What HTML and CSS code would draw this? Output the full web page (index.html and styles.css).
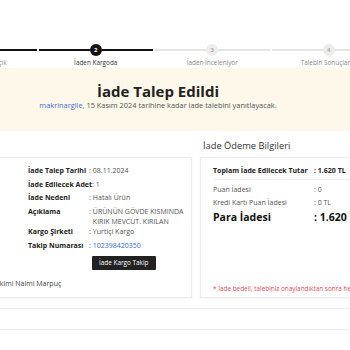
FILE: index.html
```html
<!DOCTYPE html>
<html lang="tr">

<head>
    <meta charset="UTF-8">
    <meta name="viewport" content="width=device-width, initial-scale=1.0">
    <title>İade Talebi</title>
    <link rel="stylesheet" href="styles.css">
</head>

<body>
    <div class="page">
        <!-- Steps -->
        <div class="steps">
            <div class="step done">
                <div class="step-bar"><span class="line"></span><span class="dot">1</span><span class="line"></span></div>
                <div class="step-label">İade Talebiniz Açık</div>
            </div>
            <div class="step done current">
                <div class="step-bar"><span class="line"></span><span class="dot">2</span><span class="line"></span></div>
                <div class="step-label">İaden Kargoda</div>
            </div>
            <div class="step">
                <div class="step-bar"><span class="line"></span><span class="dot">3</span><span class="line"></span></div>
                <div class="step-label">İaden İnceleniyor</div>
            </div>
            <div class="step">
                <div class="step-bar"><span class="line"></span><span class="dot">4</span><span class="line"></span></div>
                <div class="step-label">Talebin Sonuçlandı</div>
            </div>
        </div>

        <!-- Banner -->
        <div class="banner">
            <h1>İade Talep Edildi</h1>
            <p><a href="#">makrinargile</a>, 15 Kasım 2024 tarihine kadar iade talebini yanıtlayacak.</p>
        </div>

        <div class="columns">
            <div class="col">
                <h2 class="col-title">Ürün Bilgileri</h2>
                <div class="card product-card">
                    <div class="product">
                        <div class="thumb"></div>
                        <div class="details">
                            <div class="row"><span class="label">İade Talep Tarihi</span><span class="colon">:</span><span class="value">08.11.2024</span></div>
                            <div class="row"><span class="label">İade Edilecek Adet</span><span class="colon">:</span><span class="value">1</span></div>
                            <div class="row"><span class="label">İade Nedeni</span><span class="colon">:</span><span class="value">Hatalı Ürün</span></div>
                            <div class="row"><span class="label">Açıklama</span><span class="colon">:</span><span class="value desc">ÜRÜNÜN GÖVDE KISMINDA KIRIK MEVCUT. KIRILAN PARÇA</span></div>
                            <div class="row"><span class="label">Kargo Şirketi</span><span class="colon">:</span><span class="value">Yurtiçi Kargo</span></div>
                            <div class="row"><span class="label">Takip Numarası</span><span class="colon">:</span><span class="value"><a href="#">102398420350</a></span></div>
                            <button class="track-btn">İade Kargo Takip</button>
                        </div>
                    </div>
                    <div class="seller">Satıcı: Hakimi Naimi Marpuç</div>
                </div>
            </div>

            <div class="col">
                <h2 class="col-title">İade Ödeme Bilgileri</h2>
                <div class="card pay-card">
                    <div class="pay-row total"><span class="pay-label">Toplam İade Edilecek Tutar</span><span>: 1.620 TL</span></div>
                    <div class="pay-row"><span class="pay-label">Puan İadesi</span><span>: 0</span></div>
                    <div class="pay-row"><span class="pay-label">Kredi Kartı Puan İadesi</span><span>: 0 TL</span></div>
                    <div class="pay-row big"><span class="pay-label">Para İadesi</span><span>: 1.620 TL</span></div>
                    <p class="note">* İade bedeli, talebiniz onaylandıktan sonra hesabınıza aktarılacaktır.</p>
                </div>
            </div>
        </div>

        <div class="more"></div>
    </div>
</body>

</html>
```

FILE: styles.css
```css
* {
    margin: 0;
    padding: 0;
    box-sizing: border-box;
}

body {
    font-family: 'Open Sans', 'Liberation Sans', sans-serif;
    background-color: #fff;
    color: #333;
    overflow: hidden;
}

.page {
    width: 474px;
    margin-left: -79px;
    padding-top: 44px;
}

/* Steps */
.steps {
    display: grid;
    grid-template-columns: repeat(4, 116.5px);
}

.step {
    display: flex;
    flex-direction: column;
    align-items: center;
}

.step-bar {
    display: flex;
    align-items: center;
    width: 100%;
    padding: 0 1px;
}

.step-bar .line {
    flex: 1;
    height: 2px;
    background-color: #e4e4e4;
}

.step.done .line {
    background-color: #111;
}

.dot {
    width: 12px;
    height: 12px;
    border-radius: 50%;
    background-color: #ececec;
    color: #aaa;
    font-size: 6px;
    font-weight: 700;
    line-height: 12px;
    text-align: center;
}

.step.done .dot {
    background-color: #111;
    color: #fff;
}

.step-label {
    margin-top: 2px;
    font-size: 6.4px;
    line-height: 9px;
    color: #888;
    white-space: nowrap;
}

.step.current .step-label {
    color: #333;
}

/* Banner */
.banner {
    margin-top: 1px;
    background-color: #fdf8e9;
    padding: 15px 0 21px;
    text-align: center;
}

.banner h1 {
    font-size: 15px;
    line-height: 17px;
    font-weight: 700;
    color: #222;
}

.banner p {
    font-size: 7.4px;
    line-height: 10px;
    color: #555;
}

.banner a {
    color: #3f6fd6;
    text-decoration: none;
}

/* Columns */
.columns {
    display: grid;
    grid-template-columns: 271px 195px;
    gap: 8px;
    margin-top: 8px;
}

.col {
    display: flex;
    flex-direction: column;
}

.col-title {
    font-size: 9.3px;
    line-height: 14px;
    font-weight: 400;
    color: #333;
    padding-left: 3px;
    margin-bottom: 4px;
}

.col:first-child .col-title {
    visibility: hidden;
}

.card {
    flex: 1;
    border: 1px solid #ececec;
    box-shadow: 0 1px 3px rgba(0, 0, 0, 0.05);
    background-color: #fff;
}

/* Product card */
.product-card {
    padding: 8px 0 8px;
}

.product {
    display: grid;
    grid-template-columns: 90px 1fr;
    gap: 6px;
    padding-left: 10px;
}

.details {
    display: flex;
    flex-direction: column;
    gap: 3.5px;
    font-size: 7px;
    line-height: 10px;
}

.row {
    display: flex;
}

.label {
    flex: 0 0 auto;
    min-width: 61px;
    font-weight: 700;
    color: #222;
}

.colon {
    color: #555;
    margin-right: 2px;
}

.value {
    color: #555;
}

.value.desc {
    width: 92px;
    max-height: 17px;
    overflow: hidden;
}

.value a {
    color: #2f6fd8;
    text-decoration: none;
}

.track-btn {
    align-self: flex-start;
    margin-left: 64px;
    margin-top: 1.5px;
    height: 14px;
    padding: 0 7px;
    border: none;
    border-radius: 1px;
    background-color: #222;
    color: #fff;
    font-family: inherit;
    font-size: 6.4px;
}

.seller {
    margin-top: 9px;
    padding-left: 48px;
    font-size: 7px;
    line-height: 10px;
    color: #444;
}

/* Payment card */
.pay-card {
    display: flex;
    flex-direction: column;
    padding: 6px 0 3px 12px;
    font-size: 7px;
    line-height: 10px;
    color: #555;
}

.pay-row {
    display: flex;
    padding: 1.5px 0;
}

.pay-label {
    width: 101px;
    flex: 0 0 auto;
}

.pay-row.total {
    font-weight: 700;
    color: #222;
    padding-bottom: 3px;
    border-bottom: 1px solid #f0f0f0;
    margin-bottom: 4px;
}

.pay-row.big {
    font-size: 10.5px;
    line-height: 13px;
    font-weight: 700;
    color: #111;
    white-space: nowrap;
}

.note {
    margin-top: auto;
    font-size: 6.4px;
    line-height: 10px;
    color: #e0485e;
    white-space: nowrap;
}

.more {
    margin-top: 10px;
    height: 22px;
    border-top: 1px solid #eee;
    border-bottom: 1px solid #eee;
}
```
